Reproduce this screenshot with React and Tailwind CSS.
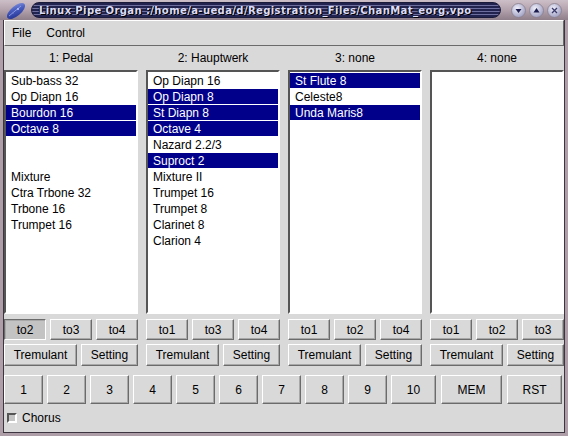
import React from 'react';

const font = { fontFamily: '"Liberation Sans", Arial, sans-serif' };

const raised = 'bg-[#d9d9d9] border border-t-white border-l-white border-b-[#6b6b6b] border-r-[#6b6b6b] shadow-[inset_-1px_-1px_0_#a8a8a8]';
const sunken = 'bg-[#c3c3c3] border border-t-[#6b6b6b] border-l-[#6b6b6b] border-b-white border-r-white shadow-[inset_1px_1px_0_#a8a8a8]';

const columns = [
  {
    title: '1: Pedal',
    items: [
      ['Sub-bass 32', false], ['Op Diapn 16', false], ['Bourdon 16', true], ['Octave 8', true],
      null, null,
      ['Mixture', false], ['Ctra Trbone 32', false], ['Trbone 16', false], ['Trumpet 16', false],
    ],
    couplers: ['to2', 'to3', 'to4'],
    pressed: 'to2',
  },
  {
    title: '2: Hauptwerk',
    items: [
      ['Op Diapn 16', false], ['Op Diapn 8', true], ['St Diapn 8', true], ['Octave 4', true],
      ['Nazard 2.2/3', false], ['Suproct 2', true], ['Mixture II', false], ['Trumpet 16', false],
      ['Trumpet 8', false], ['Clarinet 8', false], ['Clarion 4', false],
    ],
    couplers: ['to1', 'to3', 'to4'],
  },
  {
    title: '3: none',
    items: [['St Flute 8', true], ['Celeste8', false], ['Unda Maris8', true]],
    couplers: ['to1', 'to2', 'to4'],
  },
  {
    title: '4: none',
    items: [],
    couplers: ['to1', 'to2', 'to3'],
  },
];

const presets = [
  ['1', 'w-[39px]'], ['2', 'w-[39px]'], ['3', 'w-[39px]'], ['4', 'w-[39px]'], ['5', 'w-[39px]'],
  ['6', 'w-[39px]'], ['7', 'w-[39px]'], ['8', 'w-[39px]'], ['9', 'w-[39px]'], ['10', 'w-[45px]'],
  ['MEM', 'w-[61px] ml-[1px]'], ['RST', 'w-[55px] ml-[1px]'],
];

function Feather() {
  return (
    <svg width="24" height="18" viewBox="0 0 24 18">
      <defs>
        <linearGradient id="fg" x1="0" y1="1" x2="1" y2="0">
          <stop offset="0" stopColor="#1a2a8a" />
          <stop offset="0.6" stopColor="#4a5ec0" />
          <stop offset="1" stopColor="#8a9ae0" />
        </linearGradient>
      </defs>
      <ellipse cx="13" cy="9" rx="11" ry="5" transform="rotate(-40 13 9)" fill="url(#fg)" />
      <path d="M6 14 L18 4" stroke="#9aa8ee" strokeWidth="0.8" />
      <circle cx="15" cy="7" r="1" fill="#c0c8f4" />
      <circle cx="10" cy="11" r="0.8" fill="#7080d0" />
    </svg>
  );
}

function WinButton({ kind }) {
  return (
    <svg width="15" height="15" viewBox="0 0 15 15">
      <defs>
        <radialGradient id={'wb' + kind} cx="0.4" cy="0.35" r="0.7">
          <stop offset="0" stopColor="#eeeefa" />
          <stop offset="1" stopColor="#9c9cc0" />
        </radialGradient>
      </defs>
      <circle cx="7.5" cy="7.5" r="7" fill={'url(#wb' + kind + ')'} stroke="#8a7f8c" strokeWidth="0.8" />
      {kind === 'down' && <path d="M4.5 6 L10.5 6 L7.5 10 Z" fill="#1c1c4c" />}
      {kind === 'up' && <path d="M4.5 9.5 L10.5 9.5 L7.5 5 Z" fill="#1c1c4c" />}
      {kind === 'close' && <path d="M5 5 L10 10 M10 5 L5 10" stroke="#3a3a6a" strokeWidth="1.3" />}
    </svg>
  );
}

function Column({ title, items, couplers, pressed }) {
  return (
    <div className="flex flex-col">
      <div className="h-[24px] flex items-center justify-center text-[12px] text-black">{title}</div>
      <div className="h-[244px] bg-white border-2 border-t-[#555] border-l-[#555] border-b-white border-r-white overflow-hidden">
        {items.map((it, i) => (
          <div key={i} className="h-[16px] pt-[1px]">
            {it && (
              <div className={`h-[15px] pl-[5px] flex items-center text-[12px] leading-none whitespace-nowrap ${it[1] ? 'bg-[#00008b] text-white' : 'text-black'}`}>
                {it[0]}
              </div>
            )}
          </div>
        ))}
      </div>
      <div className="mt-[5px] h-[21px] flex gap-[4px]">
        {couplers.map(c => (
          <div key={c} className={`flex-1 flex items-center justify-center text-[12px] ${c === pressed ? sunken : raised}`}>{c}</div>
        ))}
      </div>
      <div className="mt-[4px] h-[22px] flex gap-[4px]">
        <div className={`w-[73px] flex items-center justify-center text-[12px] ${raised}`}>Tremulant</div>
        <div className={`flex-1 flex items-center justify-center text-[12px] ${raised}`}>Setting</div>
      </div>
    </div>
  );
}

export default function App() {
  return (
    <div className="w-[568px] h-[436px] bg-[#ae9ea8] flex flex-col overflow-hidden" style={font}>
      {/* title bar */}
      <div className="h-[20px] flex items-center bg-gradient-to-b from-[#cdbfc7] via-[#b3a2ac] to-[#8f7f8a]">
        <div className="pl-[3px] pt-[1px] w-[31px]"><Feather /></div>
        <div className="h-[16px] w-[470px] rounded-l-[9px] rounded-r-[9px] border border-[#1a1a3a] bg-[repeating-linear-gradient(to_bottom,#23234f_0px,#23234f_2px,#6e6e9e_2px,#6e6e9e_3px)] flex items-center pl-[7px]">
          <span className="text-[10px] font-bold text-[#dcdcfa] tracking-[0.4px] whitespace-nowrap [text-shadow:1px_1px_0_#000,-1px_0_0_#111]" style={{ fontFamily: '"DejaVu Sans", Verdana, sans-serif' }}>
            Linux Pipe Organ :/home/a-ueda/d/Registration_Files/ChanMat_eorg.vpo
          </span>
        </div>
        <div className="ml-auto mr-[6px] flex gap-[3px]">
          <WinButton kind="down" />
          <WinButton kind="up" />
          <WinButton kind="close" />
        </div>
      </div>

      {/* window body */}
      <div className="ml-[3px] mr-[3px] h-[413px] bg-[#d9d9d9] border border-t-0 border-[#3d3540] flex flex-col">
        {/* menu */}
        <div className="h-[26px] flex items-center border border-t-white border-l-white border-b-[#6b6b6b] border-r-[#6b6b6b] text-[12px] text-black">
          <span className="px-[7px]">File</span>
          <span className="px-[8px]">Control</span>
        </div>

        <div className="grid grid-cols-4 gap-[8px]">
          {columns.map(c => <Column key={c.title} {...c} />)}
        </div>

        <div className="mt-[9px] h-[29px] flex gap-[4px]">
          {presets.map(([p, w]) => (
            <div key={p} className={`${w} flex items-center justify-center text-[12px] ${raised}`}>{p}</div>
          ))}
        </div>

        <div className="flex-1 flex items-center pl-[3px] gap-[5px] text-[12px] text-black">
          <div className="w-[10px] h-[10px] bg-[#c3c3c3] border-2 border-t-[#555] border-l-[#555] border-b-white border-r-white" />
          <span>Chorus</span>
        </div>
      </div>
    </div>
  );
}
